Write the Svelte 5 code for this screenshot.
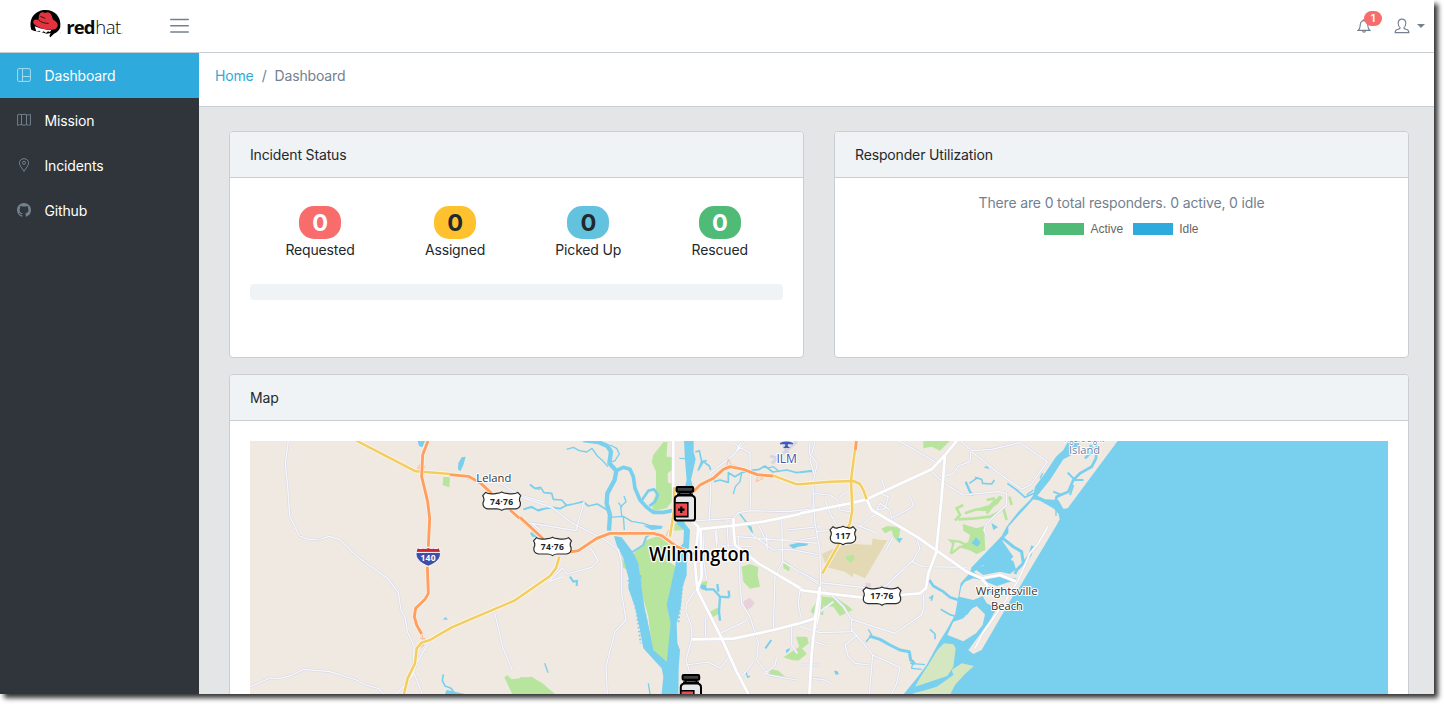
<script>
  const nav = [
    { label: 'Dashboard', icon: 'dash', active: true },
    { label: 'Mission', icon: 'map' },
    { label: 'Incidents', icon: 'pin' },
    { label: 'Github', icon: 'github' },
  ];
  const statuses = [
    { label: 'Requested', tone: 'danger', count: 0, w: 69.5 },
    { label: 'Assigned', tone: 'warning', count: 0, w: 59.5 },
    { label: 'Picked Up', tone: 'info', count: 0, w: 66 },
    { label: 'Rescued', tone: 'success', count: 0, w: 56 },
  ];

  // Map geometry is split in three survey tiles (offset in tile units, 3 units per px).
  const water = [
    { dx: 825, lines: [
      [13, 'M190 30 L235 36 262 48 273 65 268 100 289 122 284 150 262 190 260 220 270 255 267 302'],
      [11, 'M289 122 L310 112 330 118 340 140 345 175 360 210 380 232 400 247 430 247 460 241'],
      [8, 'M366 210 L385 182 402 178 414 195 405 215 388 228'],
      [4, 'M270 45 L290 55 298 72 285 92 275 96'],
      [4, 'M140 58 L160 52 178 62 200 66 216 55 232 78 250 94 264 110'],
      [5, 'M30 163 L45 175 62 172 72 188 95 190 100 208 125 210 140 226 160 222 190 215 205 228 232 222 262 240'],
      [5, 'M10 238 L35 230 55 242 75 236 98 232 120 236 140 226'],
      [4, 'M268 262 L310 259 335 274 370 280 405 292 M310 259 L313 300 M305 258 L302 230 318 215 312 198 M306 232 L295 218'],
      [5, 'M526 66 L538 62 545 95 535 120 550 95 568 108 572 120 M545 95 L560 92'],
      [5, 'M582 155 L600 150 625 157 625 128 645 140 665 128 690 122 718 118 735 108 758 126 800 120 830 128 878 122'],
      [4, 'M640 192 L646 170 660 155 665 128 M740 115 L760 110 775 122 M478 85 L500 86'],
      [6, 'M337 366 L370 345 378 322 395 308'],
      [7, 'M540 470 L560 478 580 478 600 500 628 502 M600 500 L597 545 600 572 M595 485 L592 462 M628 502 L626 482'],
      [6, 'M736 655 L754 630 M150 440 L160 455 171 452 170 468'],
      [4, 'M74 700 L84 728 M385 760 L390 792 M660 252 L685 285 M678 725 L683 742 690 738'],
    ], areas: [
      'M492 30H521V66L527 88 513 150 521 175 480 262 510 300 507 350 500 400 500 435 488 470 482 530 470 580 472 640 480 660 476 715 475 800H424L430 740 425 715 402 690 370 655 358 590 345 530 325 475 327 450 310 385 290 345 282 318 305 322 338 365 355 400 362 455 375 540 388 600 400 660 440 695 446 640 452 580 440 525 452 470 466 408 470 360 490 340 492 300 470 282 480 230 500 150 495 90Z',
      'M370 287L400 285 428 288 425 296 395 300Z', 'M806 345L835 338 865 340 862 346 835 350 820 356Z', 'M540 462L558 466 562 482 545 478Z', 'M30 308L48 305 46 321 36 320Z', 'M798 660L810 653 808 662 798 670Z', 'M682 285L695 290 699 312 690 300Z',
    ] },
    { dx: 0, lines: [
      [5, 'M595 733 L592 752 600 768 618 775 630 792'], [4, 'M855 165 L868 175 885 178 M838 238 L858 232 878 240 895 236'],
    ], areas: ['M518 33H540L532 52 522 48Z','M640 100L650 82 662 80 655 105 646 124 639 118Z','M857 305L875 310 890 325 870 322Z','M593 568L603 561 608 570Z','M605 780L660 792H600Z'] },
    { dx: 1665, lines: [
      [7, 'M497 155 L510 185 520 196'], [5, 'M525 142 L545 148 548 160 575 162 583 150 M508 160 L530 145'],
      [9, 'M208 618 L240 628 270 645 300 660 328 665 332 690 345 702'], [4, 'M198 636 L215 615 205 598 M330 700 L375 704 M340 690 L335 715 365 718'],
      [8, 'M388 450 L400 468 430 485 450 502 482 512'], [5, 'M388 505 L398 498 394 512 M422 538 L450 554 478 562 M390 598 L405 612 405 628'],
      [5, 'M622 160 L650 180 675 202 702 190'], [4, 'M0 128 L20 125 38 125 38 112'],
    ], areas: ['M574 278L594 292 580 300Z','M515 340L528 322 542 338 532 350Z','M102 722L112 723 117 733 107 734Z','M290 325L308 324 298 340Z','M0 342L25 340 15 348 0 348Z','M550 112L562 108 568 118Z'] },
  ];
  const parks = [
    { dx: 0, areas: ['M595 140L615 142 613 172 593 166Z','M778 742L788 736 800 748 860 740 900 766V800H805Z'] },
    { dx: 825, areas: [
      'M0 742L32 742 65 758 105 792H0Z',
      'M400 75L430 37 442 35 440 80 458 82 456 120 443 130 444 158 456 160 455 215 440 235 400 242 395 225 408 190 408 125 395 95Z',
      'M345 365L380 330 420 316 455 345 460 372 440 390 468 410 448 490 442 530 456 590 440 697 412 680 395 650 385 560 360 470 355 410 335 380Z',
      'M465 280L495 276 492 300 462 302Z', 'M302 382L322 400 318 418 308 412 302 395Z','M665 410L690 402 715 412 713 435 720 470 690 476 670 455Z','M790 390L810 402 808 424 790 415Z',
      'M545 456L562 453 560 468 545 466Z','M570 545L595 532 595 552 578 562Z','M748 716L775 722 800 745 765 742 748 738Z','M828 620L862 622 865 640 842 650 860 672 835 692 815 690 790 682 815 665 838 650Z','M872 545L890 520H910V555L880 552Z','M680 285L692 288 700 310 690 300Z'] },
    { dx: 1665, areas: [
      'M370 32H450L420 62 395 50 370 55Z','M488 282L530 295 552 288 556 360 530 372 512 362 478 350 505 335 510 315 490 302Z',
      'M244 296L262 288 302 292 294 336 280 320 275 300 255 310Z','M34 540L60 498 110 505 145 528 158 540 120 558 100 530 70 528 40 552Z','M0 620L20 620 26 640 8 655 0 650Z'] },
  ];
  const greenways = [
    [8, 'M465 272 L480 255 470 235 490 225 M475 268 L525 265 570 260 600 245 M495 250 L530 238 560 240 590 220 605 200 M530 240 L570 228 588 208 M560 210 L585 205 M600 200 L560 250 M610 235 L620 270 M628 200 L635 225'],
    [7, 'M452 372 L460 340 452 332 478 335 500 345 M455 370 L480 350 510 355'],
  ];
  const minorRoads = [
    { dx: 0, d: 'M130 33 L121 100 128 170 134 258 163 318 195 329 228 327 252 319 285 329 342 385 428 445 460 488 468 540 480 562 487 605 507 648 505 725 532 792 M15 770 L75 744 105 745 140 736 176 718 255 725 335 750 360 765 400 775 415 792 M748 545 L766 620 772 650 802 720 M505 735 L455 792 M550 640 L515 700 500 740 M765 160 L825 195 900 217 M850 278 L900 285' },
    { dx: 825, d: 'M0 200 L95 232 150 275 255 330 295 360 305 400 305 490 318 570 285 605 258 710 262 792 M0 278 L35 280 168 302 192 215 M35 280 L60 300 M210 352 L235 392 215 412 140 432 128 414 85 455 M85 455 L130 440 M570 130 L640 75 675 35 M570 130 L572 190 567 278 M640 40 L690 70 692 230 M665 33 L650 60 M885 35 L870 90 882 130 878 240 M530 272 L640 265 655 248 690 242 800 245 900 235 M690 310 L760 360 810 358 900 375 M552 310 L550 385 560 450 M585 300 L590 350 M650 320 L900 340 M600 345 L700 350 M655 320 L660 460 665 520 690 560 715 640 710 690 745 735 830 750 M740 310 L742 360 M785 270 L788 395 765 440 760 600 M790 395 L900 465 M710 275 L740 335 M840 480 L835 520 842 560 M530 475 L500 520 498 545 515 590 515 630 M515 627 L498 690 510 730 M498 705 L565 696 600 715 628 680 M600 610 L680 572 M556 565 L557 620 M590 300 L592 340 M700 695 L665 740 M770 682 L765 705 730 735 M815 590 L815 645 832 670 M885 600 L900 602 M870 705 H900 M870 745 H900 M620 265 L625 350 M800 300 L900 290' },
    { dx: 1665, d: 'M298 33 L410 98 M483 33 L515 62 575 58 660 38 742 95 692 165 665 178 590 125 515 65 M390 120 L430 158 490 195 595 185 620 190 620 225 560 280 552 300 565 325 M430 140 L460 130 475 108 510 95 512 65 M30 35 L28 70 52 100 38 160 45 280 60 360 62 470 55 560 M40 190 L90 195 112 210 120 240 150 245 M120 200 L135 188 M75 210 L90 250 110 285 M245 150 L260 190 M238 190 L265 200 255 235 230 240 240 220 270 240 275 265 330 235 340 225 330 200 M180 290 L215 260 240 250 M50 305 L100 300 M0 330 L50 322 M170 285 L228 308 M350 325 L360 355 340 390 260 465 200 485 M335 395 L370 410 500 412 M60 458 L215 475 M280 320 L255 365 M0 425 L55 455 M65 475 L100 500 130 530 155 570 155 605 60 608 0 590 M155 568 L285 610 365 555 372 530 370 490 M155 600 L190 640 218 675 300 712 290 760 275 792 M218 675 L208 792 M172 615 L135 645 145 680 165 700 210 705 M45 635 L80 648 M35 745 L75 750 95 762 M0 705 L50 705 M100 515 L30 568' },
  ];
  const majorRoads = [
    { dx: 825, d: 'M460 33 V180 M515 272 L535 290 525 400 532 480 605 625 650 725 685 792 M530 298 L640 287 730 275 900 240 M515 628 L640 626 760 600 870 572 895 550 M542 300 L545 440 532 480 M640 287 L645 345 715 400 850 480 900 487 M640 265 L641 290 M900 500 L895 560 878 620 870 792' },
    { dx: 1665, d: 'M0 250 L150 220 200 208 395 118 435 75 470 33 M435 75 L425 200 408 370 385 430 378 475 360 490 300 495 M200 208 L215 240 350 320 500 425 545 445 600 435 650 455 M545 445 L565 470 M0 480 L60 488 190 503 M0 580 L45 565 60 470 M60 480 L45 580 35 670 28 792' },
    { dx: 1665, thin: true, d: 'M744 290 L715 340 690 370 655 450 615 515 550 605 M548 610 L590 550 M550 605 L525 655' },
  ];
  const yellow = [
    { dx: 0, d: 'M330 30 L512 124 615 132 M475 800 L488 745 510 700 515 655 530 638 555 630 620 592 690 562 808 512 900 448' },
    { dx: 825, d: 'M0 500 L90 438 108 415 118 380 M463 172 L462 240 450 320 M760 137 L790 148 830 163 900 158' },
    { dx: 1665, d: 'M0 163 L90 155 160 153 180 162 190 180 200 208 M165 60 L153 150 157 240 150 280 115 345 67 430' },
  ];
  const orange = [
    { dx: 0, d: 'M550 30 L533 75 530 140 548 215 554 265 550 350 M547 410 L550 490 540 508 512 535 508 560 515 585 530 612 M615 134 L670 139 705 158 740 190 M795 240 L895 328' },
    { dx: 825, d: 'M0 262 L70 327 M150 366 L175 362 230 325 270 310 400 310 425 317 470 350 530 375 M520 185 L540 165 580 145 610 118 630 110 670 118 712 134 760 138' },
    { dx: 1665, d: 'M169 33 L166 60' },
  ];
  const ramps = [
    { dx: 0, d: 'M530 95 L518 115 540 112Z M650 134 L675 150 M525 625 L540 625 528 655 M532 615 L535 650' },
    { dx: 825, d: 'M625 88 L618 120 635 105Z M640 105 L685 122 M708 155 L715 138 730 145Z M410 318 L450 335 438 320 446 300 M420 325 L445 330' },
  ];
  const bottles = [{ x: 673, y: 486 }, { x: 679, y: 674 }];
  const shields = [
    { x: 482.7, y: 492.4, w: 38, label: '74·76' },
    { x: 533.5, y: 537.6, w: 38, label: '74·76' },
    { x: 830, y: 526.7, w: 26, label: '117' },
    { x: 863, y: 587.3, w: 38, label: '17·76' },
  ];
  const shieldPath = (w) =>
    `M3 0 Q6 2.4 ${w / 2 - 5} 1 Q${w / 2 - 2} .8 ${w / 2} -.4 Q${w / 2 + 2} .8 ${w / 2 + 5} 1 Q${w - 6} 2.4 ${w - 3} 0 L${w} 3.2 Q${w - 2.4} 7 ${w - .4} 10 Q${w + .4} 15.6 ${w - 5} 16.4 H${w / 2 + 5} Q${w / 2 + 2} 16.4 ${w / 2} 18 Q${w / 2 - 2} 16.4 ${w / 2 - 5} 16.4 H5 Q-.4 15.6 .4 10 Q2.4 7 0 3.2 Z`;
</script>

<div class="window">
  <header>
    <svg class="brand" viewBox="0 0 125 52" width="125" height="52">
      <g transform="translate(0 -1) scale(.33333)">
        <path d="M94 92 C84 57 107 33 137 33 C165 33 183 54 181 80 C181 90 174 99 162 104 L151 115 L148 111 L152 102 L140 104 L126 100 L110 97 L103 96Z" />
        <path fill="#fff" d="M104 82 L120 88 145 93 154 92 150 99 144 97 138 102 131 97 124 101 118 95 109 97Z" />
        <path fill="#e2333f" d="M117 50 C119 39 128 37 136 42 C144 37 152 41 155 50 L159 62 C176 69 178 84 164 91 C146 97 106 85 100 72 C98 63 106 59 115 63Z" />
        <path fill="none" stroke="#101010" stroke-width="2.6" d="M115 62 C121 69 134 74 146 73 M121 52 L136 58" />
      </g>
      <text class="red" x="66.3" y="33.8">red<tspan class="hat" dx=".6">hat</tspan></text>
      <circle cx="122.2" cy="33.2" r=".5" fill="#999" /><circle cx="60.3" cy="33" r=".4" fill="#999" />
    </svg>
    <svg class="burger" viewBox="0 0 20 16" width="20" height="16">
      <path d="M.8 1.5H18.2M.8 7.8H18.2M.8 14H18.2" stroke="#73818f" stroke-width="1.6" stroke-linecap="round" />
    </svg>
    <div class="tools">
      <div class="bell">
        <svg viewBox="0 0 14 16" width="14" height="16" fill="none" stroke="#73818f" stroke-width="1.1">
          <path d="M1.2 12.4 C3.4 10.8 3 8.5 3.3 6.4 C3.6 4 5 2.8 7 2.8 S10.4 4 10.7 6.4 C11 8.5 10.6 10.8 12.8 12.4Z M5.5 12.6 C5.6 14.8 8.4 14.8 8.5 12.6 M6 2.8 C6 1.3 8 1.3 8 2.8" />
        </svg>
        <span class="count">1</span>
      </div>
      <svg class="user" viewBox="0 0 16 16" width="16" height="16" fill="none" stroke="#73818f" stroke-width="1.1">
        <path d="M6 9.4 C4.7 8.5 4.2 7 4.2 5.2 C4.2 2.6 5.7 1.1 8 1.1 S11.8 2.6 11.8 5.2 C11.8 7 11.3 8.5 10 9.4 C9.7 10.4 10.4 10.8 12 11.2 C14.4 11.7 14.9 12.3 14.9 14.6 H1.1 C1.1 12.3 1.6 11.7 4 11.2 C5.6 10.8 6.3 10.4 6 9.4Z" />
      </svg>
      <i class="caret"></i>
    </div>
  </header>

  <div class="body">
    <nav>
      {#each nav as item}
        <a class:active={item.active} href="#{item.label.toLowerCase()}">
          <svg viewBox="0 0 14 14" width="14" height="14" fill="none" stroke="currentColor" stroke-width="1">
            {#if item.icon === 'dash'}
              <rect x=".6" y=".6" width="12.8" height="12.8" rx="1.3" /><path d="M5.5 .6V13.4M5.5 8.5H13.4" />
            {:else if item.icon === 'map'}
              <path d="M.6 1.8 C2.5 .6 3.5 1.8 5 1.7 S7.5 .8 9.2 1.6 S12 1.8 13.4 1.3 V12 C12 12.7 10.7 11.5 9.2 11.8 S6.5 12.5 5 11.8 S2.2 12 .6 12.4Z M4.5 1.8V11.8M9.5 1.7V11.7" />
            {:else if item.icon === 'pin'}
              <path d="M7 13.3 C5 10 2.4 7.5 2.4 4.9 C2.4 2.3 4.5 .7 7 .7 S11.6 2.3 11.6 4.9 C11.6 7.5 9 10 7 13.3Z" /><circle cx="7" cy="4.8" r="1.5" />
            {:else}
              <path fill="currentColor" stroke="none" transform="scale(.875)" d="M8 0C3.58 0 0 3.58 0 8c0 3.54 2.29 6.53 5.47 7.59.4.07.55-.17.55-.38 0-.19-.01-.82-.01-1.49-2.01.37-2.53-.49-2.69-.94-.09-.23-.48-.94-.82-1.13-.28-.15-.68-.52-.01-.53.63-.01 1.08.58 1.23.82.72 1.21 1.87.87 2.33.66.07-.52.28-.87.51-1.07-1.78-.2-3.64-.89-3.64-3.95 0-.87.31-1.59.82-2.15-.08-.2-.36-1.02.08-2.12 0 0 .67-.21 2.2.82.64-.18 1.32-.27 2-.27s1.36.09 2 .27c1.53-1.04 2.2-.82 2.2-.82.44 1.1.16 1.92.08 2.12.51.56.82 1.27.82 2.15 0 3.07-1.87 3.75-3.65 3.95.29.25.54.73.54 1.48 0 1.07-.01 1.93-.01 2.2 0 .21.15.46.55.38A8.01 8.01 0 0 0 16 8c0-4.42-3.58-8-8-8z" />
            {/if}
          </svg>
          <span>{item.label}</span>
        </a>
      {/each}
    </nav>

    <main>
      <div class="crumbs"><a href="#home">Home</a><span class="sep">/</span><span>Dashboard</span></div>
      <div class="content">
        <div class="cards">
          <section class="card">
            <h2>Incident Status</h2>
            <div class="inner">
              <div class="stats">
                {#each statuses as s}
                  <div class="stat" style="width:{s.w}px"><b class={s.tone}>{s.count}</b><span>{s.label}</span></div>
                {/each}
              </div>
              <div class="progress"></div>
            </div>
          </section>
          <section class="card">
            <h2>Responder Utilization</h2>
            <div class="inner util">
              <p>There are 0 total responders. 0 active, 0 idle</p>
              <div class="legend"><i class="on"></i><span>Active</span><i></i><span>Idle</span></div>
            </div>
          </section>
        </div>

        <section class="card mapcard">
          <h2>Map</h2>
          <div class="inner">
            <svg class="map" viewBox="250 441 1138 253" width="1138" height="253">
              <rect x="250" y="441" width="1138" height="253" fill="#efe9e1" />
              <g transform="translate(245 430) scale(.333333)">
                <g transform="translate(1665 0)">
                  <path fill="#e3dab5" d="M65 372L112 350 165 342 215 345 218 325 240 330 262 330 195 445 160 430 158 442 135 425 80 412Z" />
                  <path fill="#b8e59e" d="M138 378L160 374 164 386 152 398 140 390Z" />
                  <path fill="#e8d1da" d="M196 458L212 460 214 474 198 474Z" />
                </g>
                <g transform="translate(825 0)">
                  <path fill="#e8d1da" d="M672 512L690 503 704 518 696 530 678 542 670 530Z" />
                  <path stroke="#d8d4df" stroke-width="9" fill="none" d="M755 100L830 35M790 45L810 80M750 78L775 85" />
                </g>
                {#each parks as p}<g transform="translate({p.dx} 0)" fill="#b8e59e">{#each p.areas as d}<path {d} />{/each}</g>{/each}
                <g transform="translate(1665 0)" fill="none" stroke="#b8e59e">{#each greenways as [w, d]}<path {d} stroke-width={w} />{/each}</g>

                <g transform="translate(1665 0)">
                  <path fill="#79cfee" d="M805 33 L790 60 768 80 735 130 705 170 700 195 690 210 655 245 620 290 605 318 570 355 515 412 510 428 482 460 475 500 465 555 440 600 415 640 380 705 350 745 305 800H1900V30Z" />
                  <g fill="#efe9e1">
                    <path d="M832 60L815 75 790 88 750 150 712 197 735 208 775 210 790 236 803 235 953 33H840Z" />
                    <path d="M700 208L720 212 762 236 776 252 779 268 770 285 655 478 636 460 648 445 600 440 545 445 522 425 550 405 590 408 625 395 640 380 605 330 625 310 625 290Z" />
                    <path d="M495 455L520 445 545 450 590 468 640 452 655 470 545 660 520 672 505 660 565 580 590 535 560 520 548 498 520 510 478 500 484 470Z" />
                    <path d="M470 572L490 565 510 540 530 528 555 553 548 585 528 610 490 634 442 615 460 575Z" />
                  </g>
                  <path fill="#d5e7c1" d="M432 640L460 643 467 655 460 710 442 738 390 755 345 770 365 735 385 705 412 660Z M340 790L370 782 410 770 460 735 455 720 485 700 522 708 495 732 465 765 450 795H340Z" />
                  <g fill="none" stroke="#79cfee">
                    <path stroke-width="8" d="M890 45 L888 85 875 110 840 130 820 150 805 185 770 200 765 225 M875 65 L855 85 M885 65 L870 45" />
                    <path stroke-width="6" d="M803 128 L825 150 850 150 M820 165 L810 195 M760 185 L785 195" />
                    <path stroke-width="9" d="M605 322 L640 350 665 365 670 400 650 420 645 432 M670 400 L690 375 698 348 M625 370 L630 400" />
                    <path stroke-width="8" d="M485 508 L520 520 550 530 575 548 560 580 M470 560 L500 550 525 515 M560 470 L580 492" />
                    <path stroke-width="4" d="M720 145 L728 130 M680 195 L700 180 M768 235 V258 M610 325 L590 350" />
                  </g>
                  <path fill="#79cfee" d="M525 418L555 405 620 388 640 392 648 418 630 432 600 425 550 435Z" />
                </g>
                {#each water as t}
                  <g transform="translate({t.dx} 0)">
                    <g fill="none" stroke="#79cfee" stroke-linejoin="round">{#each t.lines as [w, d]}<path {d} stroke-width={w} />{/each}</g>
                    {#each t.areas as d}<path {d} fill="#79cfee" />{/each}
                  </g>
                {/each}
                <path transform="translate(825 0)" fill="none" stroke="#79cfee" stroke-width="4" stroke-dasharray="14 5" d="M362 435 L362 500 378 560 390 625" />
                <path transform="translate(825 0)" fill="none" stroke="#79cfee" stroke-width="6" stroke-dasharray="5 7" d="M325 450 L350 545 362 640 M490 440 L475 580" />

                <g fill="none" stroke-linejoin="round">
                  {#each minorRoads as r}<g transform="translate({r.dx} 0)"><path d={r.d} stroke="#dadae8" stroke-width="7.5" /><path d={r.d} stroke="#f8f8fc" stroke-width="3.6" /></g>{/each}
                  {#each majorRoads as r}<g transform="translate({r.dx} 0)"><path d={r.d} stroke="#dfdfe9" stroke-width={r.thin ? 8 : 11} /><path d={r.d} stroke="#fff" stroke-width={r.thin ? 4 : 8} /></g>{/each}
                  {#each ramps as r}<path transform="translate({r.dx} 0)" d={r.d} stroke="#fbb58b" stroke-width="2.5" />{/each}
                  {#each yellow as r}<g transform="translate({r.dx} 0)"><path d={r.d} stroke="#fdf7e6" stroke-width="12" /><path d={r.d} stroke="#f3cd62" stroke-width="7.5" /></g>{/each}
                  {#each orange as r}<g transform="translate({r.dx} 0)"><path d={r.d} stroke="#fdf1e6" stroke-width="13" /><path d={r.d} stroke="#ff9f5f" stroke-width="8.5" /></g>{/each}
                </g>
              </g>

              <g class="place">
                <text x="476.3" y="482.3" font-size="11.5" textLength="35" lengthAdjust="spacingAndGlyphs">Leland</text>
                <text x="975.7" y="595.3" font-size="11.5" textLength="62" lengthAdjust="spacingAndGlyphs">Wrightsville</text>
                <text x="991" y="609.6" font-size="11.5" textLength="32" lengthAdjust="spacingAndGlyphs">Beach</text>
                <g fill="#6c7fa8">
                  <text x="1064" y="442" font-size="11" textLength="40" lengthAdjust="spacingAndGlyphs">Figure Eight</text>
                  <text x="1069" y="454.3" font-size="11" textLength="31" lengthAdjust="spacingAndGlyphs">Island</text>
                </g>
                <text x="776.4" y="463" font-size="12" fill="#4054b2" textLength="20.5" lengthAdjust="spacingAndGlyphs">ILM</text>
                <path d="M780 442.9 Q786.5 440 793 442.9 V444.2 H787.8 V446 L790 448 H783 L785.2 446 V444.2 H780Z" fill="#3f58c4" />
              </g>

              {#each shields as s}
                <g transform="translate({s.x} {s.y})">
                  <path d={shieldPath(s.w)} fill="#fff" stroke="#2c2c2c" stroke-width="1.2" stroke-linejoin="round" />
                  <text class="route" x={s.w / 2} y="12.2" text-anchor="middle">{s.label}</text>
                </g>
              {/each}
              <g transform="translate(416 547.5)">
                <path d="M1.5 .5 Q4 2 7 1 Q10 1.8 12.2 .4 Q14.5 1.8 17.5 1 Q20.5 2 23 .5 L24.3 5 C25.4 10.5 20.5 15.5 12.2 18.8 C4 15.5 -1 10.5 .2 5Z" fill="#3f4fa8" stroke="#fff" stroke-width=".9" />
                <path d="M1.7 .9 Q4 2.3 7 1.3 Q10 2.1 12.2 .8 Q14.5 2.1 17.5 1.3 Q20.5 2.3 22.8 .9 L23.8 4.3 H.7Z" fill="#cf2430" />
                <path d="M.4 4.9H24" stroke="#fff" stroke-width="1" />
                <text class="route inter" x="12.2" y="13.2" text-anchor="middle">140</text>
              </g>

              {#each bottles as b}
                <g transform="translate({b.x} {b.y})" stroke="#000" stroke-width="2">
                  <path d="M5 8.5H19V11H5Z" fill="#444" />
                  <rect x="3.6" y="1" width="16.6" height="4.8" rx="1" fill="#3d4143" />
                  <path d="M6.4 6H17.4V9H6.4Z" fill="#53585a" />
                  <path d="M5.6 9.6H18.2Q22 10.2 22 13.2V32.2Q22 34.6 19.6 34.6H4.2Q1.8 34.6 1.8 32.2V13.2Q1.8 10.2 5.6 9.6Z" fill="#e7e8ea" />
                  <path d="M1.8 16.8H14.8V30.6H1.8Z" fill="#ee4b50" stroke-width="1.6" />
                  <path d="M8.3 20.4V27M5 23.7H11.6" stroke-width="2.2" />
                </g>
              {/each}
              <text class="city" x="649" y="561" textLength="101" lengthAdjust="spacingAndGlyphs">Wilmington</text>
            </svg>
          </div>
        </section>
      </div>
    </main>
  </div>
</div>

<style>
  :global(html), :global(body) { height: 704px; margin: 0; background: #fff; }
  :global(body) { overflow: hidden; }
  .window {
    width: 1434px; height: 694px; overflow: hidden; display: flex; flex-direction: column;
    background: #e4e5e6; box-shadow: 4px 4px 5px rgba(0, 0, 0, .8);
    font: 14px/21px Inter, "Liberation Sans", sans-serif; color: #23282c; letter-spacing: -.15px;
  }
  a { text-decoration: none; }
  header { height: 52px; flex: none; display: flex; align-items: center; background: #fff; border-bottom: 1px solid #c8ced3; }
  .brand { flex: none; }
  .red { font: 700 18.5px "Open Sans", sans-serif; fill: #0a0a0a; letter-spacing: -.9px; }
  .hat { font-weight: 300; letter-spacing: -.5px; }
  .burger { margin-left: 44.5px; }
  .tools { margin: -1px 0 0 auto; display: flex; align-items: center; padding-right: 9px; }
  .bell { position: relative; display: flex; margin-right: 23px; }
  .count {
    position: absolute; left: 7px; top: -7px; width: 18px; height: 15px; border-radius: 8px;
    background: #f86c6b; color: #fff; font-size: 10.5px; line-height: 15px; font-weight: 600; text-align: center;
  }
  .user { margin-right: 7px; }
  .caret { border: 4px solid transparent; border-top-color: #73818f; border-bottom: 0; }
  .body { display: flex; flex: 1; min-height: 0; }
  nav { width: 199px; flex: none; background: #2f353a; }
  nav a { display: flex; align-items: center; height: 45px; padding-left: 17px; color: #fff; box-sizing: border-box; }
  nav a svg { color: #73818f; margin: -1px 13.5px 0 0; }
  nav a.active { background: #2eaadc; }
  nav a.active svg { color: #a5daf0; }
  main { flex: 1; min-width: 0; }
  .crumbs { height: 54px; display: flex; box-sizing: border-box; padding: 12px 16px; background: #fff; border-bottom: 1px solid #c8ced3; color: #73818f; }
  .crumbs a { color: #2eaadc; }
  .sep { margin: 0 8px; }
  .content { padding: 24px 25px 0 30px; }
  .cards { display: grid; grid-template-columns: 1fr 1fr; gap: 30px; margin-bottom: 16px; }
  .card { height: 227px; box-sizing: border-box; background: #fff; border: 1px solid #c8ced3; border-radius: 4px; overflow: hidden; }
  h2 { margin: 0; height: 46px; box-sizing: border-box; padding: 12px 20px 0; font-size: 14px; line-height: 21px; font-weight: 400; background: #f0f3f5; border-bottom: 1px solid #c8ced3; }
  .inner { padding: 20px; }
  .stats { display: flex; justify-content: space-around; padding-top: 8px; }
  .stat { display: flex; flex-direction: column; align-items: center; white-space: nowrap; }
  .stat b { width: 42px; height: 33px; border-radius: 15px; font-size: 23.5px; line-height: 34px; text-align: center; color: #fff; }
  .stat .danger { background: #f86c6b; }
  .stat .warning { background: #ffc12e; color: #23282c; }
  .stat .info { background: #63c2de; color: #23282c; }
  .stat .success { background: #4fbb76; }
  .progress { height: 16px; margin-top: 24px; border-radius: 4px; background: #f0f3f5; }
  .util { padding-top: 14px; text-align: center; }
  .util p { margin: 0; color: #73818f; }
  .legend { display: flex; align-items: center; justify-content: center; height: 12px; margin-top: 10px; font: 12px/12px "Liberation Sans", sans-serif; letter-spacing: 0; color: #666; }
  .legend i { width: 40px; height: 12px; margin-right: 6px; background: #2eaadc; }
  .legend .on { background: #4fbb76; }
  .legend .on + span { margin-right: 10px; }
  .mapcard { height: 380px; }
  .map { display: block; letter-spacing: 0; }
  .place { fill: #333; }
  .place text { font-family: "Open Sans", sans-serif; font-weight: 500; paint-order: stroke; stroke: #fff; stroke-width: 2px; stroke-linejoin: round; }
  .route { font: 700 8.5px "Open Sans", sans-serif; letter-spacing: .3px; fill: #222; }
  .inter { fill: #fff; }
  .city { font: 600 19px "Open Sans", sans-serif; paint-order: stroke; stroke: #fff; stroke-width: 2.5px; stroke-linejoin: round; }
</style>
